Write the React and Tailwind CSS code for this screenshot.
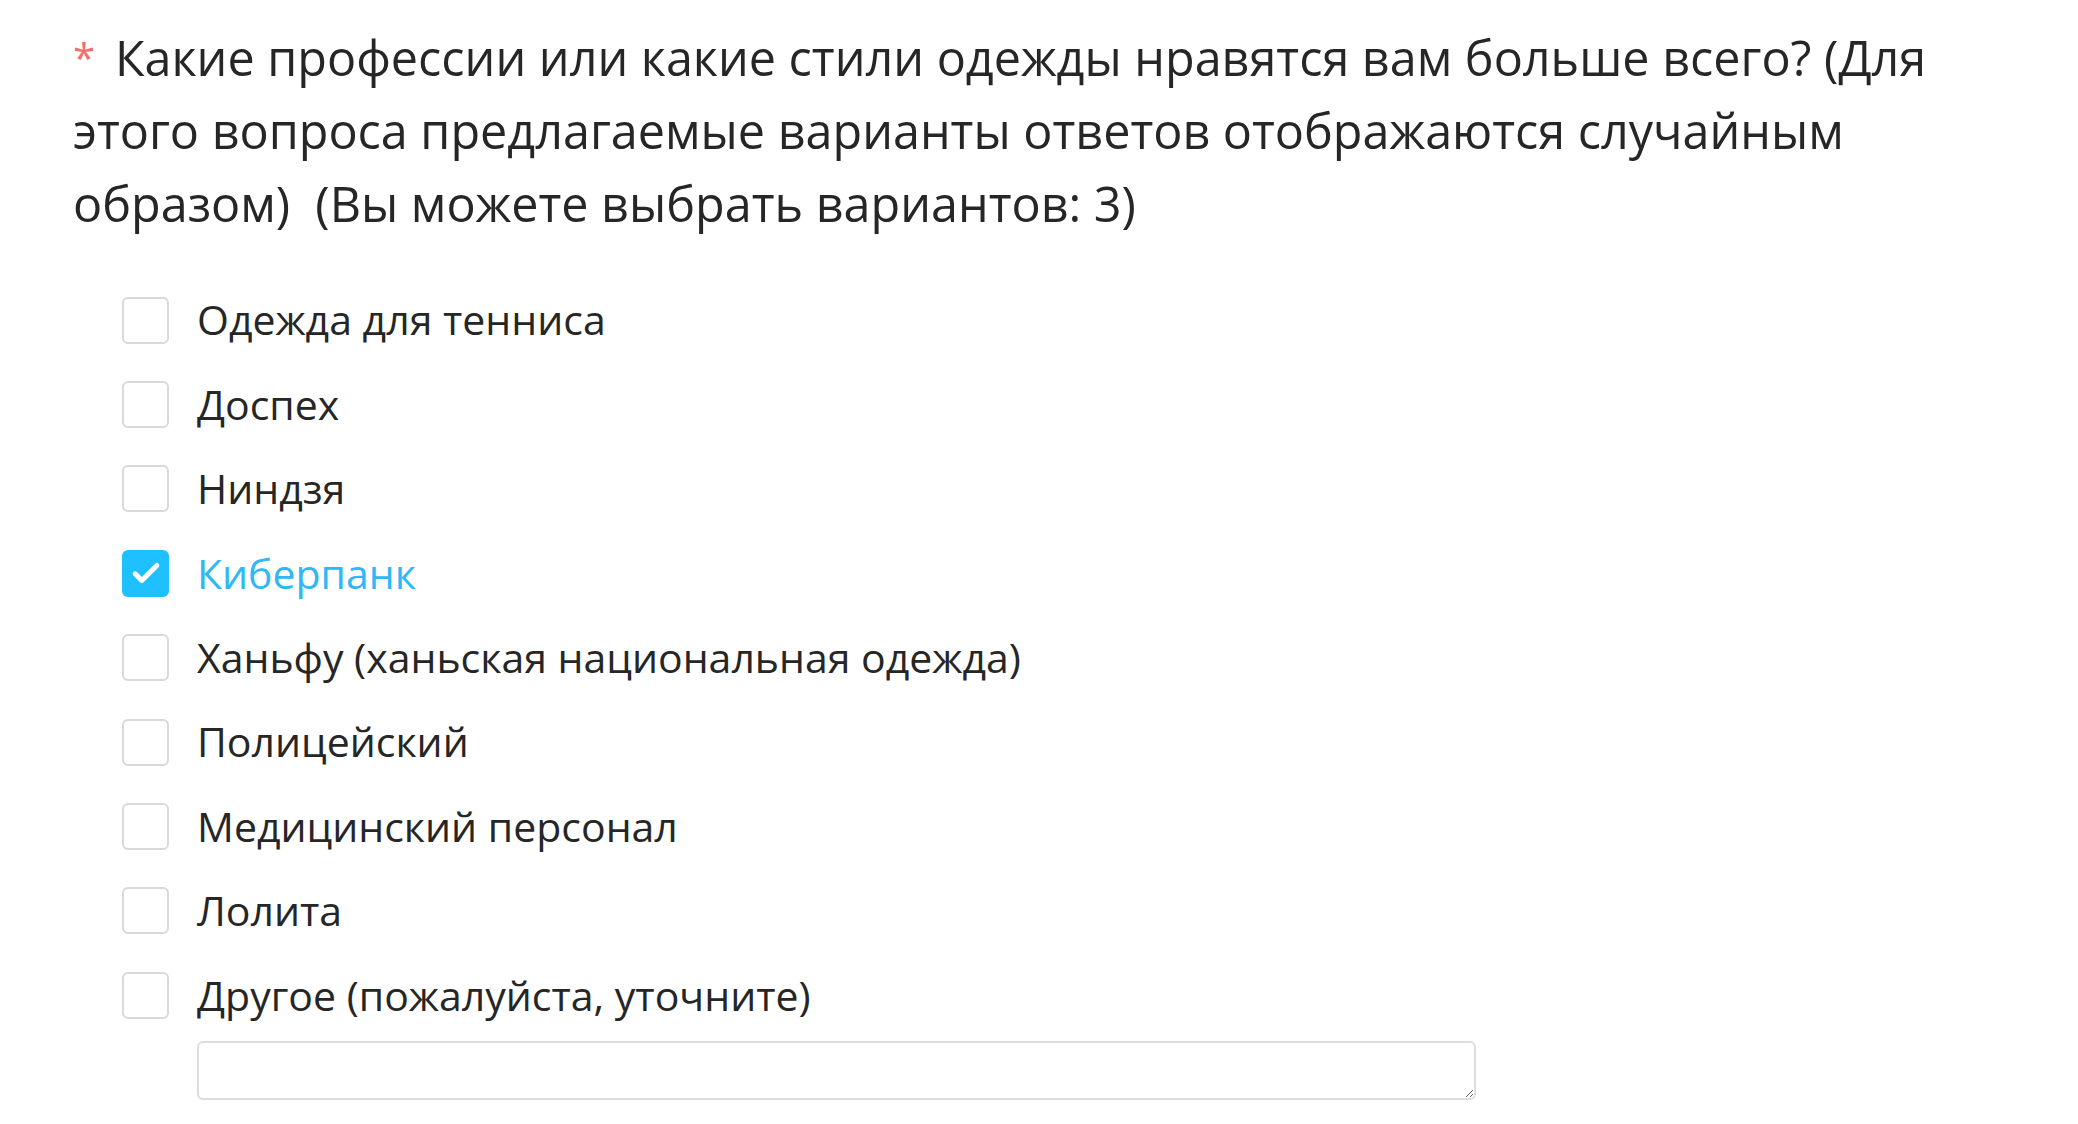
import { useState } from "react";

const options = [
  "Одежда для тенниса",
  "Доспех",
  "Ниндзя",
  "Киберпанк",
  "Ханьфу (ханьская национальная одежда)",
  "Полицейский",
  "Медицинский персонал",
  "Лолита",
  "Другое (пожалуйста, уточните)",
];

const App = () => {
  const [checked, setChecked] = useState(["Киберпанк"]);

  const toggle = (opt) => {
    setChecked((prev) =>
      prev.includes(opt) ? prev.filter((o) => o !== opt) : [...prev, opt]
    );
  };

  return (
    <div
      className="min-h-screen bg-white pl-[73px] pr-[60px] pt-[21px]"
      style={{ fontFamily: '"Open Sans", "Noto Sans", sans-serif' }}
    >
      <h2 className="text-[48.5px] leading-[73px] font-normal text-[#262626]">
        <span className="inline-block align-top text-[#f56c6c] text-[40px] leading-[73px] w-[42px]">
          *
        </span>
        Какие профессии или какие стили одежды нравятся вам больше всего? (Для
        этого вопроса предлагаемые варианты ответов отображаются случайным
        образом)&nbsp; (Вы можете выбрать вариантов: 3)
      </h2>

      <div className="mt-[38px] pl-[49px]">
        {options.map((opt) => {
          const on = checked.includes(opt);
          return (
            <label
              key={opt}
              className="flex items-center h-[84.4px] gap-[28px] cursor-pointer"
              onClick={() => toggle(opt)}
            >
              <span
                className={
                  on
                    ? "w-[47px] h-[47px] rounded-[6px] bg-[#1ec0ff] flex items-center justify-center flex-shrink-0"
                    : "w-[47px] h-[47px] rounded-[6px] border-2 border-[#d9d9d9] bg-white flex-shrink-0"
                }
              >
                {on && (
                  <svg width="40" height="40" viewBox="0 0 24 24" fill="none">
                    <path
                      d="M5.5 12.5l4 4L18.5 7.5"
                      stroke="white"
                      strokeWidth="3"
                      strokeLinecap="round"
                      strokeLinejoin="round"
                    />
                  </svg>
                )}
              </span>
              <span
                className={
                  on
                    ? "text-[41px] text-[#2fb8f5]"
                    : "text-[41px] text-[#262626]"
                }
              >
                {opt}
              </span>
            </label>
          );
        })}

        <div className="pl-[75px] mt-[3px]">
          <textarea className="block w-[1279px] h-[59px] border-2 border-[#dedede] rounded-[6px] outline-none resize-y" />
        </div>
      </div>
    </div>
  );
};

export default App;
